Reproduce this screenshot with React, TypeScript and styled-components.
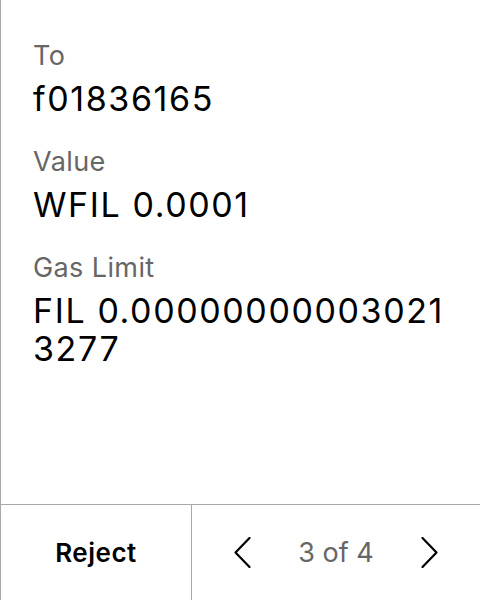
import styled, { createGlobalStyle } from 'styled-components';

const GlobalStyle = createGlobalStyle`
  html, body {
    margin: 0;
    padding: 0;
    background: #ffffff;
  }
  body {
    font-family: Inter, "Noto Sans", sans-serif;
    color: #000000;
  }
`;

const Page = styled.div`
  height: 100vh;
  box-sizing: border-box;
  display: flex;
  flex-direction: column;
  border-left: 1px solid #a8a8a8;
`;

const Details = styled.div`
  flex: 1;
  padding: 40px 20px 0 32px;
  display: flex;
  flex-direction: column;
  gap: 28px;
`;

const Field = styled.div`
  display: flex;
  flex-direction: column;
  gap: 8px;
`;

const Label = styled.div`
  font-size: 27px;
  line-height: 32px;
  letter-spacing: 0.4px;
  color: #666666;
`;

const Value = styled.div`
  font-size: 34px;
  line-height: 38px;
  letter-spacing: 1.6px;
  color: #000000;
  word-break: break-all;
`;

const Footer = styled.div`
  height: 96px;
  box-sizing: border-box;
  border-top: 1px solid #a8a8a8;
  display: grid;
  grid-template-columns: 191px 1fr;
`;

const RejectButton = styled.button`
  border: none;
  border-right: 1px solid #a8a8a8;
  background: none;
  font-family: inherit;
  font-size: 26px;
  font-weight: 600;
  letter-spacing: 0.5px;
  color: #000000;
  cursor: pointer;
`;

const Pager = styled.div`
  display: flex;
  align-items: center;
  justify-content: space-between;
  padding: 0 42px;
`;

const ArrowButton = styled.button`
  border: none;
  background: none;
  padding: 0;
  display: flex;
  cursor: pointer;
`;

const PageCount = styled.span`
  font-size: 27px;
  color: #666666;
`;

const Chevron = ({ dir }: { dir: 'left' | 'right' }) => (
  <svg width="17" height="31" viewBox="0 0 17 31" fill="none">
    <polyline
      points={dir === 'left' ? '15.5,1 1.5,15.5 15.5,30' : '1.5,1 15.5,15.5 1.5,30'}
      stroke="#000"
      strokeWidth="2.2"
      strokeLinecap="round"
      strokeLinejoin="round"
    />
  </svg>
);

const fields = [
  { label: 'To', value: 'f01836165' },
  { label: 'Value', value: 'WFIL 0.0001' },
  { label: 'Gas Limit', value: 'FIL 0.000000000030213277' },
];

export default function App() {
  return (
    <>
      <GlobalStyle />
      <Page>
        <Details>
          {fields.map(f => (
            <Field key={f.label}>
              <Label>{f.label}</Label>
              <Value>{f.value}</Value>
            </Field>
          ))}
        </Details>
        <Footer>
          <RejectButton>Reject</RejectButton>
          <Pager>
            <ArrowButton aria-label="Previous">
              <Chevron dir="left" />
            </ArrowButton>
            <PageCount>3 of 4</PageCount>
            <ArrowButton aria-label="Next">
              <Chevron dir="right" />
            </ArrowButton>
          </Pager>
        </Footer>
      </Page>
    </>
  );
}
